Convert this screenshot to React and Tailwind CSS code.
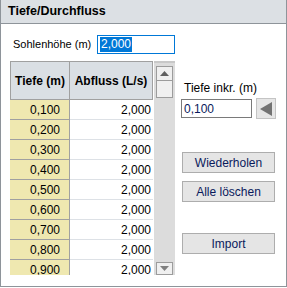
const rows = ['0,100', '0,200', '0,300', '0,400', '0,500', '0,600', '0,700', '0,800', '0,900'];

function Button({ children, className = '' }) {
  return (
    <button
      className={`w-[93px] h-[21px] border border-[#adadad] bg-[#e5e5e5] text-[12px] text-[#0a1a5c] leading-none ${className}`}
    >
      {children}
    </button>
  );
}

export default function App() {
  return (
    <div
      className="w-[287px] h-[287px] bg-white border-x border-b border-[#8e949a] overflow-hidden text-black"
      style={{ fontFamily: '"Liberation Sans", Arial, sans-serif' }}
    >
      <div className="h-[24px] bg-[#dce0e4] border-b border-[#8e949a] flex items-center pl-[7px] text-[12.5px] font-bold">
        Tiefe/Durchfluss
      </div>

      <div className="flex pl-[9px]">
        {/* left column */}
        <div className="w-[165px]">
          <div className="mt-[11px] flex items-center h-[19px]">
            <span className="pl-[3px] w-[87px] text-[11px] whitespace-nowrap">Sohlenhöhe (m)</span>
            <div className="w-[78px] h-[19px] border border-[#0078d7] flex items-center pl-[2px]">
              <span className="bg-[#0078d7] text-white text-[12px] leading-[15px] px-[1px]">2,000</span>
            </div>
          </div>

          <div className="mt-[7px] flex h-[214px]">
            <div className="w-[143px] h-[214px] overflow-hidden">
              <div className="flex h-[39px] border border-[#a0a0a0] bg-[#dadfe4] text-[12px] font-bold">
                <div className="w-[59px] border-r border-[#a0a0a0] flex items-center justify-center">Tiefe (m)</div>
                <div className="flex-1 flex items-center justify-center">Abfluss (L/s)</div>
              </div>
              {rows.map((r) => (
                <div key={r} className="flex h-[20px] text-[12px]">
                  <div className="w-[60px] bg-[#efe8b0] border-r border-b border-[#a0a0a0] flex items-center justify-end pr-[9px]">
                    {r}
                  </div>
                  <div className="flex-1 border-b border-[#dde1e6] flex items-center justify-end pr-[2px]">2,000</div>
                </div>
              ))}
            </div>
            <div className="ml-[1px] w-[21px] h-[214px] bg-[#dcdcdc] border-t-[2px] border-[#c8c8c8] flex flex-col items-center pt-[3px]">
              <div className="w-[17px] h-[15px] border border-[#9c9c9c] bg-[#f0f0f0] flex items-center justify-center">
                <svg width="9" height="5" viewBox="0 0 9 5">
                  <path d="M0 5 L4.5 0 L9 5 Z" fill="#606060" />
                </svg>
              </div>
              <div className="w-[17px] h-[17px] border border-[#9c9c9c] border-t-0 bg-[#f0f0f0]" />
              <div className="flex-1" />
              <div className="w-[17px] h-[13px] border border-[#9c9c9c] bg-[#f0f0f0] flex items-center justify-center">
                <svg width="9" height="5" viewBox="0 0 9 5">
                  <path d="M0 0 L4.5 5 L9 0 Z" fill="#808080" />
                </svg>
              </div>
            </div>
          </div>
        </div>

        {/* right column */}
        <div className="ml-[6px] flex flex-col">
          <div className="mt-[57px] pl-[3px] text-[12px] leading-[14px]">Tiefe inkr. (m)</div>
          <div className="mt-[3px] flex items-center">
            <div className="w-[71px] h-[19px] border border-[#7a7a7a] flex items-center pl-[2px] text-[12px] text-[#0a1a5c]">
              0,100
            </div>
            <div className="ml-[4px] w-[20px] h-[21px] border border-[#c4c4c4] bg-[#e6e6e6] flex items-center justify-center">
              <svg width="12" height="14" viewBox="0 0 12 14">
                <path d="M0 7 L12 0 L12 14 Z" fill="#737373" />
              </svg>
            </div>
          </div>
          <Button className="mt-[33px] ml-[1px]">Wiederholen</Button>
          <Button className="mt-[8px] ml-[1px]">Alle löschen</Button>
          <Button className="mt-[31px] ml-[1px]">Import</Button>
        </div>
      </div>
    </div>
  );
}
